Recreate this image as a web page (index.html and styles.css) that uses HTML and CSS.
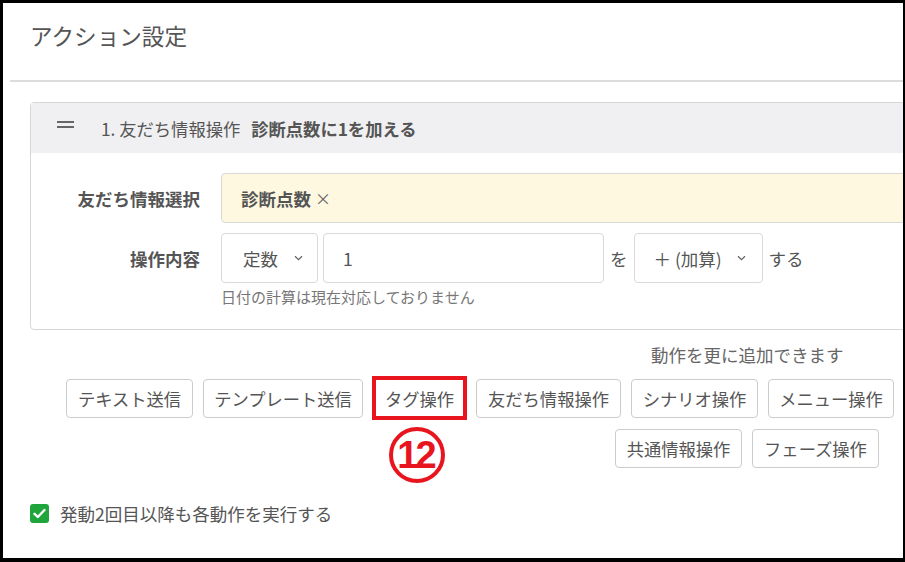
FILE: index.html
```html
<!DOCTYPE html>
<html lang="ja">
<head>
<meta charset="utf-8">
<title>アクション設定</title>
<link rel="stylesheet" href="styles.css">
</head>
<body>
<div class="frame">
  <div class="page-head">
    <h1 class="page-title">アクション設定</h1>
  </div>

  <div class="card">
    <div class="card-head">
      <span class="drag-icon"></span>
      <span class="card-title">1. 友だち情報操作</span>
      <span class="card-summary">診断点数に1を加える</span>
    </div>
    <div class="card-body">
      <div class="form-row">
        <div class="form-label">友だち情報選択</div>
        <div class="tag-field"><span class="tag-name">診断点数</span><span class="tag-x">×</span></div>
      </div>
      <div class="form-row row-gap">
        <div class="form-label">操作内容</div>
        <div class="op-line">
          <div class="select sel-type"><span>定数</span>
            <svg class="chev" width="9" height="6" viewBox="0 0 9 6"><path d="M1 1.2 L4.5 4.6 L8 1.2" fill="none" stroke="#666" stroke-width="1.3"/></svg>
          </div>
          <div class="text-input">1</div>
          <span class="op-word">を</span>
          <div class="select sel-op"><span>＋ (加算)</span>
            <svg class="chev" width="9" height="6" viewBox="0 0 9 6"><path d="M1 1.2 L4.5 4.6 L8 1.2" fill="none" stroke="#666" stroke-width="1.3"/></svg>
          </div>
          <span class="op-word suru">する</span>
        </div>
      </div>
      <div class="hint">日付の計算は現在対応しておりません</div>
    </div>
  </div>

  <div class="actions">
    <p class="actions-note">動作を更に追加できます</p>
    <div class="btn-row row-one">
      <button class="btn w127">テキスト送信</button>
      <button class="btn w160">テンプレート送信</button>
      <button class="btn w93 marked">タグ操作<span class="mark-box"></span><span class="mark-num">12</span></button>
      <button class="btn w145">友だち情報操作</button>
      <button class="btn w127">シナリオ操作</button>
      <button class="btn w126">メニュー操作</button>
    </div>
    <div class="btn-row row-two">
      <button class="btn w127">共通情報操作</button>
      <button class="btn w127">フェーズ操作</button>
    </div>
  </div>

  <label class="check-row">
    <span class="checkbox">
      <svg width="13" height="11" viewBox="0 0 13 11"><path d="M1.5 5.8 L4.8 9 L11.5 2" fill="none" stroke="#fff" stroke-width="2.4" stroke-linecap="round" stroke-linejoin="round"/></svg>
    </span>
    <span class="check-text">発動2回目以降も各動作を実行する</span>
  </label>
</div>
</body>
</html>
```

FILE: styles.css
```css
* { box-sizing: border-box; }

html, body {
  margin: 0;
  padding: 0;
  background: #000;
}

body {
  font-family: "Noto Sans CJK JP", "Noto Sans", sans-serif;
  color: #555;
}

.frame {
  width: 905px;
  height: 562px;
  border-style: solid;
  border-color: #000;
  border-width: 3px 2px 4px 3px;
  background: #fff;
  overflow: hidden;
}

.page-head {
  margin-left: 7px;
  height: 79px;
  padding: 18px 0 0 20px;
  border-bottom: 2px solid #dcdcdc;
}

.page-title {
  margin: 0;
  font-size: 22.6px;
  line-height: 30px;
  font-weight: 400;
  color: #555;
}

.card {
  margin: 20px 0 0 27px;
  width: 1000px;
  border: 1px solid #d6d6d6;
  border-radius: 4px;
}

.card-head {
  height: 50px;
  background: #f0f0f2;
  display: flex;
  align-items: center;
  padding-left: 26px;
  font-size: 17.3px;
  color: #555;
}

.drag-icon {
  width: 17px;
  height: 7px;
  border-top: 2px solid #666;
  border-bottom: 2px solid #666;
  margin: 0 27px 7px 0;
}

.card-summary {
  font-weight: 700;
  margin-left: 11px;
}

.card-body {
  padding: 20px 0 22px 0;
}

.form-row {
  display: flex;
  align-items: center;
  height: 50px;
}

.row-gap { margin-top: 10px; }

.form-label {
  width: 169px;
  text-align: right;
  font-size: 17.5px;
  font-weight: 700;
  color: #555;
  margin-right: 21px;
  flex: none;
}

.tag-field {
  flex: 1;
  height: 50px;
  background: #fff8e1;
  border: 1px solid #d9d9d9;
  border-radius: 4px;
  display: flex;
  align-items: center;
  padding-left: 19px;
  font-size: 17.5px;
}

.tag-name { font-weight: 700; }
.tag-x { margin-left: 4px; font-size: 16px; color: #666; }

.op-line {
  display: flex;
  align-items: center;
  height: 50px;
  font-size: 17.5px;
}

.select, .text-input {
  height: 50px;
  border: 1px solid #d9d9d9;
  border-radius: 4px;
  display: flex;
  align-items: center;
  background: #fff;
}

.sel-type {
  width: 97px;
  padding-left: 21px;
}
.sel-type .chev { margin-left: 16px; }

.text-input {
  width: 281px;
  margin-left: 5px;
  padding-left: 19px;
}

.op-word { margin: 0 6px; }
.op-word.suru { margin: 0 0 0 6px; }

.sel-op {
  width: 129px;
  padding-left: 19px;
}
.sel-op .chev { margin-left: 15px; }

.chev { display: block; flex: none; }

.hint {
  margin: 4px 0 0 190px;
  font-size: 15px;
  line-height: 20px;
  color: #777;
}

.actions {
  margin-top: 13px;
}

.actions-note {
  margin: 0;
  padding-left: 648px;
  font-size: 17.5px;
  line-height: 24px;
  color: #666;
}

.btn-row {
  display: flex;
  gap: 10px;
}

.row-one {
  margin-top: 11.5px;
  padding-left: 63px;
}

.row-two {
  margin-top: 11px;
  padding-left: 612px;
}

.btn {
  font-family: "Noto Sans CJK JP", "Noto Sans", sans-serif;
  font-size: 17.3px;
  color: #555;
  background: #fff;
  border: 1px solid #cccccc;
  border-radius: 4px;
  height: 39px;
  padding: 0;
  line-height: 37px;
  text-align: center;
  white-space: nowrap;
}

.w93 { width: 93px; }
.w126 { width: 126px; }
.w127 { width: 127px; }
.w145 { width: 145px; }
.w160 { width: 160px; }

.marked { position: relative; }

.mark-box {
  position: absolute;
  left: -2px;
  right: -2px;
  top: -4px;
  bottom: -3px;
  border: 4px solid #e8141e;
}

.mark-num {
  position: absolute;
  left: 15px;
  top: 47px;
  width: 56px;
  height: 56px;
  border: 4px solid #e8141e;
  border-radius: 50%;
  color: #e8141e;
  font-family: "Liberation Sans", sans-serif;
  font-weight: 700;
  font-size: 38px;
  line-height: 48px;
  letter-spacing: -3px;
  text-indent: -3px;
  text-align: center;
}

.check-row {
  display: flex;
  align-items: center;
  margin: 34px 0 0 27px;
  height: 24px;
}

.checkbox {
  width: 19px;
  height: 19px;
  background: #20a53d;
  border-radius: 3px;
  display: flex;
  align-items: center;
  justify-content: center;
  margin-right: 11px;
}

.checkbox svg { display: block; }

.check-text {
  font-size: 17.5px;
  color: #555;
}
```
